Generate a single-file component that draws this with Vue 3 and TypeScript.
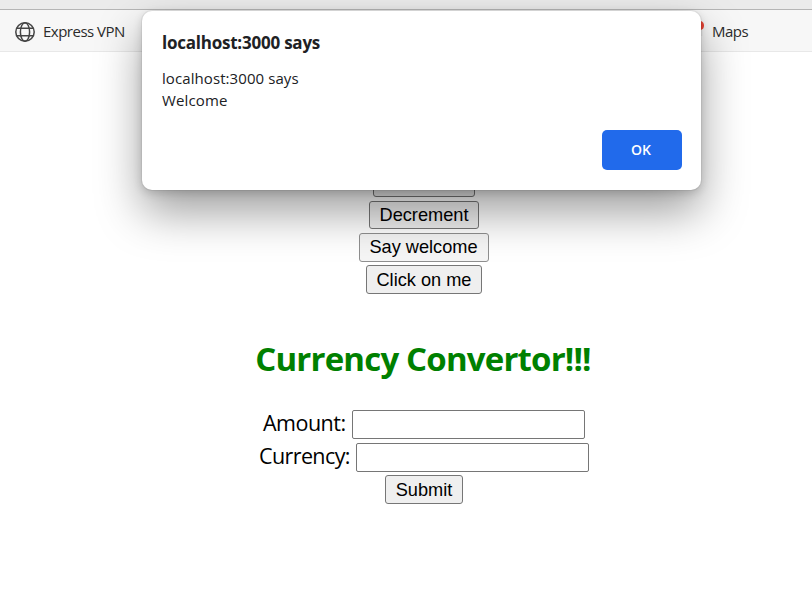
<script setup lang="ts">
import { ref } from 'vue'

const count = ref<number>(0)
const amount = ref<string>('')
const currency = ref<string>('')
const dialogOpen = ref<boolean>(true)
</script>

<template>
  <div class="window">
    <div class="toolbar-edge"></div>
    <nav class="bookmarks">
      <a class="bookmark">
        <svg class="globe" viewBox="0 0 20 20" fill="none" stroke="#444" stroke-width="1.5">
          <circle cx="10" cy="10" r="9.2" />
          <ellipse cx="10" cy="10" rx="4.6" ry="9.2" />
          <path d="M1.8 6.3H18.2M1.8 13.7H18.2" />
        </svg>
        <span class="label vpn">Express VPN</span>
      </a>
      <a class="bookmark maps-link">
        <svg class="pin" viewBox="0 0 12 18">
          <path d="M6 0H9Q12 1 12 4.500Q12 8 9 9H6z" fill="#ea4335" />
          <path d="M6 9h4.500v6H6z" fill="#e8e8e8" />
          <path d="M0.4 7A6 6 0 0 1 6 1v6z" fill="#4285f4" />
        </svg>
        <span class="label maps">Maps</span>
      </a>
    </nav>

    <main class="page">
      <div class="stack">
        <button class="btn increment" @click="count++"></button>
        <button class="btn decrement" @click="count--">Decrement</button>
        <button class="btn welcome" @click="dialogOpen = true">Say welcome</button>
        <button class="btn click-me">Click on me</button>
      </div>
      <h1><span>Currency Convertor!!!</span></h1>
      <form @submit.prevent>
        <div class="row"><label class="amount" for="amount">Amount:</label><input id="amount" v-model="amount" /></div>
        <div class="row"><label class="currency" for="currency">Currency:</label><input id="currency" v-model="currency" /></div>
        <button class="btn submit">Submit</button>
      </form>
    </main>

    <section v-if="dialogOpen" class="dialog" role="alertdialog">
      <h2>localhost:3000 says</h2>
      <p><span class="origin">localhost:3000 says</span><br /><span class="message">Welcome</span></p>
      <button class="ok" @click="dialogOpen = false">OK</button>
    </section>
  </div>
</template>

<style>
body { margin: 0; background: #fff; overflow: hidden; }
</style>

<style scoped>
* { box-sizing: border-box; }
.window {
  position: relative;
  height: 613px;
  overflow: hidden;
  font-family: "Open Sans", "Noto Sans", sans-serif;
  color: #000;
}
.toolbar-edge { height: 10px; background: #ebebeb; border-bottom: 1px solid #b5b5b5; }
.bookmarks {
  display: flex;
  justify-content: space-between;
  height: 42px;
  padding: 0 64px 0 15px;
  background: #f7f7f7;
  border-bottom: 1px solid #e8e8e8;
}
.bookmark { display: flex; align-items: center; height: 43px; color: #2b2b2b; font-size: 15px; }
.globe { width: 20px; height: 20px; margin-right: 8px; }
.pin { width: 12px; height: 18px; margin: 0 8px 4px 0; }
.label { height: 22px; line-height: 20px; white-space: nowrap; }
.vpn { width: 82px; letter-spacing: -0.5px; }
.maps { width: 36px; letter-spacing: -0.5px; }
.page { margin-left: 36px; padding-top: 116px; }
.stack, form { display: flex; flex-direction: column; align-items: center; gap: 4px; }
.btn {
  padding: 0;
  border: 1px solid #767676;
  border-radius: 3px;
  background: #efefef;
  color: #000;
  font: 18.2px "Liberation Sans", Arial, sans-serif;
  white-space: nowrap;
}
.btn.increment { width: 102px; height: 29px; }
.btn.decrement { width: 110px; height: 28px; }
.btn.welcome { width: 130px; height: 29px; padding-right: 1px; background: #f5f5f5; border-color: #8f8f8f; }
.btn.click-me { width: 116px; height: 29px; margin-top: -1px; padding-top: 1px; }
.btn.submit { width: 78px; height: 29px; margin-top: -1px; padding-top: 1px; }
h1 {
  margin: 42px 0 28px;
  padding-right: 2px;
  height: 46px;
  line-height: 46px;
  text-align: center;
  color: #008000;
  font-size: 33px;
  font-weight: 700;
  letter-spacing: -0.82px;
  white-space: nowrap;
}
.row { display: flex; align-items: center; height: 29px; }
label { height: 29px; font-size: 21.5px; line-height: 26px; white-space: nowrap; }
.amount { width: 89px; letter-spacing: -0.5px; }
.currency { width: 97px; line-height: 25px; letter-spacing: -0.6px; }
input {
  width: 233px;
  height: 29px;
  padding: 1px 3px;
  border: 1px solid #767676;
  border-radius: 2px;
  background: #fff;
  font: 18px "Liberation Sans", Arial, sans-serif;
}
.dialog {
  position: absolute;
  top: 11px;
  left: 142px;
  display: flex;
  flex-direction: column;
  width: 559px;
  height: 179px;
  padding: 20px 19px 20px 20px;
  border-radius: 10px;
  background: #fff;
  color: #202124;
  box-shadow: 0 0 0 1px rgba(0, 0, 0, .05), 0 3px 10px rgba(0, 0, 0, .16), 0 22px 46px rgba(0, 0, 0, .38);
}
h2 { margin: 0; font-size: 17px; line-height: 24px; font-weight: 700; letter-spacing: -0.23px; white-space: nowrap; }
p { margin: 12px 0 0; font-size: 15px; line-height: 22px; letter-spacing: 0.08px; white-space: nowrap; }
.message { letter-spacing: 0.15px; }
.ok {
  align-self: flex-end;
  width: 80px;
  height: 40px;
  margin-top: auto;
  padding: 0 2px 2px 0;
  border: 0;
  border-radius: 5px;
  background: #216aeb;
  color: #fff;
  font: 600 14px "Open Sans", "Noto Sans", sans-serif;
}
</style>
